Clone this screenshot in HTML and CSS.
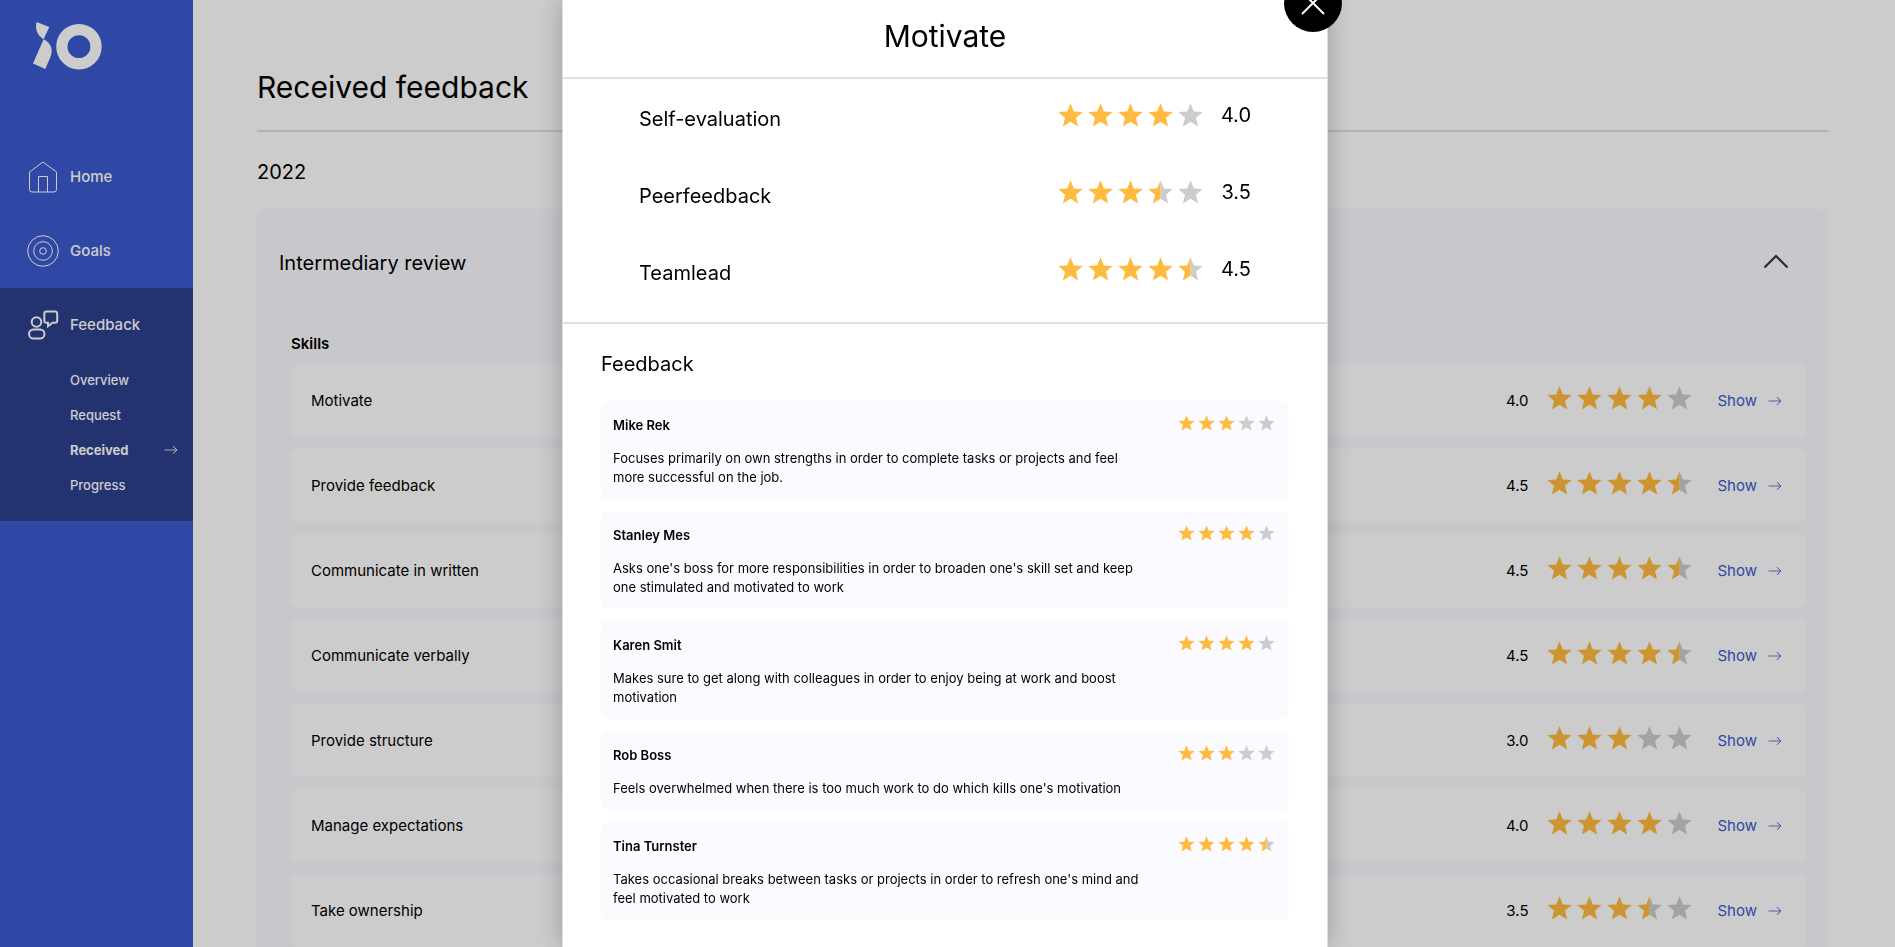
FILE: index.html
```html
<!DOCTYPE html>
<html lang="en">
<head>
<meta charset="utf-8">
<title>Received feedback</title>
<link rel="stylesheet" href="styles.css">
</head>
<body>
<svg class="sprite" aria-hidden="true">
  <symbol id="star" viewBox="0 0 25 24"><path d="M12.5 0.3 15.8 8.5 24.7 9.1 18 14.8 20.1 23.4 12.5 18.7 4.9 23.4 7 14.8 0.3 9.1 9.2 8.500Z"/></symbol>
  <symbol id="half" viewBox="0 0 25 24"><path class="off" d="M12.5 0.3 15.8 8.5 24.7 9.1 18 14.8 20.1 23.4 12.5 18.7Z"/><path d="M12.5 0.3V18.7L4.9 23.4 7 14.8 0.3 9.1 9.2 8.500Z"/></symbol>
  <symbol id="r30" viewBox="0 0 145 24"><use href="#star" width="25" height="24"/><use href="#star" x="30" width="25" height="24"/><use href="#star" x="60" width="25" height="24"/><use class="off" href="#star" x="90" width="25" height="24"/><use class="off" href="#star" x="120" width="25" height="24"/></symbol>
  <symbol id="r35" viewBox="0 0 145 24"><use href="#star" width="25" height="24"/><use href="#star" x="30" width="25" height="24"/><use href="#star" x="60" width="25" height="24"/><use href="#half" x="90" width="25" height="24"/><use class="off" href="#star" x="120" width="25" height="24"/></symbol>
  <symbol id="r40" viewBox="0 0 145 24"><use href="#star" width="25" height="24"/><use href="#star" x="30" width="25" height="24"/><use href="#star" x="60" width="25" height="24"/><use href="#star" x="90" width="25" height="24"/><use class="off" href="#star" x="120" width="25" height="24"/></symbol>
  <symbol id="r45" viewBox="0 0 145 24"><use href="#star" width="25" height="24"/><use href="#star" x="30" width="25" height="24"/><use href="#star" x="60" width="25" height="24"/><use href="#star" x="90" width="25" height="24"/><use href="#half" x="120" width="25" height="24"/></symbol>
  <symbol id="arrow" viewBox="0 0 14 10"><path class="shaft" d="M0.5 5H12.5"/><path d="M9 1.2 12.8 5 9 8.8"/></symbol>
</svg>

<div class="page">
  <aside class="sidebar">
    <svg class="logo" viewBox="98 66 208 144" role="img" aria-label="iO">
      <path d="M109 66 147 81 130 118C112 107 103 89 109 66Z"/>
      <path d="M130 118C153 129 160 151 150 173L135 207 98 191Z"/>
      <circle cx="236.500" cy="140" r="51.500"/>
    </svg>
    <nav>
      <a class="nav-item" href="#home">
        <svg class="nav-icon" viewBox="0 0 32 32"><path d="M2.500 11 16 1 29.500 11V28.500Q29.500 31 27 31H5Q2.500 31 2.500 28.500ZM11.500 31V15.500H20.500V31"/></svg>
        Home
      </a>
      <a class="nav-item" href="#goals">
        <svg class="nav-icon" viewBox="0 0 32 32"><circle cx="16" cy="16" r="15.300"/><circle cx="16" cy="16" r="9.300"/><circle cx="16" cy="16" r="3.300"/></svg>
        Goals
      </a>
      <div class="nav-group">
        <a class="nav-item" href="#feedback">
          <svg class="nav-icon thick" viewBox="0 0 32 32"><circle cx="9.500" cy="13" r="4.800"/><rect x="2" y="20.500" width="15.500" height="9" rx="4.500"/><path d="M19.500 2.500H28Q30.200 2.500 30.200 4.700V11.500Q30.200 13.700 28 13.700H25.500L21 17.200V13.700H19.500Q17.300 13.700 17.300 11.500V4.700Q17.300 2.500 19.500 2.500Z"/></svg>
          Feedback
        </a>
        <ul class="subnav">
          <li><a href="#overview">Overview</a></li>
          <li><a href="#request">Request</a></li>
          <li><a class="current" href="#received">Received <svg class="arrow"><use href="#arrow"/></svg></a></li>
          <li><a href="#progress">Progress</a></li>
        </ul>
      </div>
    </nav>
  </aside>

  <main class="main">
    <h1>Received feedback</h1>
    <h2>2022</h2>
    <section class="panel">
      <header class="panel-head">
        <h3>Intermediary review</h3>
        <button class="toggle" type="button" aria-label="Collapse"><svg viewBox="0 0 26 15"><path d="M1.500 13.500 13 2 24.500 13.500"/></svg></button>
      </header>
      <div class="skills">
        <h4>Skills</h4>
        <ul>
          <li class="skill"><span class="skill-name">Motivate</span><span>4.0</span><svg class="stars"><use href="#r40"/></svg><a href="#motivate">Show <svg class="arrow"><use href="#arrow"/></svg></a></li>
          <li class="skill"><span class="skill-name">Provide feedback</span><span>4.5</span><svg class="stars"><use href="#r45"/></svg><a href="#provide-feedback">Show <svg class="arrow"><use href="#arrow"/></svg></a></li>
          <li class="skill"><span class="skill-name">Communicate in written</span><span>4.5</span><svg class="stars"><use href="#r45"/></svg><a href="#written">Show <svg class="arrow"><use href="#arrow"/></svg></a></li>
          <li class="skill"><span class="skill-name">Communicate verbally</span><span>4.5</span><svg class="stars"><use href="#r45"/></svg><a href="#verbally">Show <svg class="arrow"><use href="#arrow"/></svg></a></li>
          <li class="skill"><span class="skill-name">Provide structure</span><span>3.0</span><svg class="stars"><use href="#r30"/></svg><a href="#structure">Show <svg class="arrow"><use href="#arrow"/></svg></a></li>
          <li class="skill"><span class="skill-name">Manage expectations</span><span>4.0</span><svg class="stars"><use href="#r40"/></svg><a href="#expectations">Show <svg class="arrow"><use href="#arrow"/></svg></a></li>
          <li class="skill"><span class="skill-name">Take ownership</span><span>3.5</span><svg class="stars"><use href="#r35"/></svg><a href="#ownership">Show <svg class="arrow"><use href="#arrow"/></svg></a></li>
        </ul>
      </div>
    </section>
  </main>
</div>

<div class="overlay">
  <div class="modal" role="dialog" aria-modal="true" aria-labelledby="modal-title">
    <button class="close" type="button" aria-label="Close"><svg viewBox="0 0 24 24"><path d="M1 1 23 23M23 1 1 23"/></svg></button>
    <h2 id="modal-title">Motivate</h2>
    <ul class="scores">
      <li><span>Self-evaluation</span><div class="score"><svg class="stars"><use href="#r40"/></svg>4.0</div></li>
      <li><span>Peerfeedback</span><div class="score"><svg class="stars"><use href="#r35"/></svg>3.5</div></li>
      <li><span>Teamlead</span><div class="score"><svg class="stars"><use href="#r45"/></svg>4.5</div></li>
    </ul>
    <section class="feedback">
      <h3>Feedback</h3>
      <article class="card"><header><h4>Mike Rek</h4><svg class="stars small"><use href="#r30"/></svg></header><p>Focuses primarily on own strengths in order to complete tasks or projects and feel more successful on the job.</p></article>
      <article class="card"><header><h4>Stanley Mes</h4><svg class="stars small"><use href="#r40"/></svg></header><p>Asks one's boss for more responsibilities in order to broaden one's skill set and keep one stimulated and motivated to work</p></article>
      <article class="card"><header><h4>Karen Smit</h4><svg class="stars small"><use href="#r40"/></svg></header><p>Makes sure to get along with colleagues in order to enjoy being at work and boost motivation</p></article>
      <article class="card"><header><h4>Rob Boss</h4><svg class="stars small"><use href="#r30"/></svg></header><p>Feels overwhelmed when there is too much work to do which kills one's motivation</p></article>
      <article class="card"><header><h4>Tina Turnster</h4><svg class="stars small"><use href="#r45"/></svg></header><p>Takes occasional breaks between tasks or projects in order to refresh one's mind and feel motivated to work</p></article>
    </section>
  </div>
</div>
</body>
</html>
```
FILE: styles.css
```css
* { box-sizing: border-box; }
html, body { height: 100%; overflow: hidden; }
body { margin: 0; font-family: Inter, "Liberation Sans", sans-serif; font-size: 15px; line-height: 20px; color: #000; background: #fff; }
h1, h2, h3, h4, p, ul { margin: 0; padding: 0; }
ul { list-style: none; }
a { color: inherit; text-decoration: none; }
button { padding: 0; border: 0; background: none; cursor: pointer; }
svg { display: block; flex: none; }
.sprite { position: absolute; width: 0; height: 0; }

.stars { width: 145px; height: 24px; fill: #ffbb3f; }
.stars.small { width: 97px; height: 16px; }
.off { fill: #ccc; }
.arrow { width: 14px; height: 10px; fill: none; stroke: currentColor; stroke-width: 1; }
.shaft { opacity: 0.8; }

.page { display: flex; min-height: 100%; }

.sidebar { flex: none; width: 193px; min-height: 100vh; padding-top: 22px; background: #3d5bcf; color: #fff; font-weight: 500; }
.logo { width: 69px; height: 48px; margin: 0 0 70px 33px; fill: #fff; }
.logo circle { fill: none; stroke: #fff; stroke-width: 34; }
.nav-item { display: flex; align-items: center; gap: 11px; height: 74px; padding-left: 27px; }
.nav-icon { width: 32px; height: 32px; fill: none; stroke: #fff; stroke-width: 1; }
.nav-icon.thick { stroke-width: 2; }
.nav-group { padding-bottom: 19px; background: #2c408c; }
.subnav a { display: flex; align-items: center; justify-content: space-between; height: 35px; padding: 0 15px 0 70px; font-size: 13px; }
.subnav .current { font-weight: 700; }

.main { flex: 1; padding: 67px 67px 0 64px; }
.main h1 { padding-bottom: 23px; border-bottom: 2px solid #e0e0e0; font-size: 30px; font-weight: 400; line-height: 40px; }
.main h2 { padding: 28px 0 25px; font-size: 20px; font-weight: 400; line-height: 24px; }
.panel { padding-bottom: 32px; border-radius: 10px; background: #faf9ff; }
.panel-head { display: flex; justify-content: space-between; align-items: center; padding: 42px 39px 42px 22px; }
.panel-head h3 { font-size: 20px; font-weight: 400; line-height: 24px; }
.toggle { padding-bottom: 4px; }
.toggle svg { width: 26px; height: 15px; fill: none; stroke: #303030; stroke-width: 2; }
.skills { padding: 17px 22px 0 34px; }
.skills h4 { padding-bottom: 10px; font-size: 15px; font-weight: 600; }
.skill { display: flex; align-items: center; height: 73px; margin-bottom: 12px; padding: 0 24px 0 20px; border-radius: 6px; background: #fff; }
.skill-name { flex: 1; }
.skill .stars { margin: 0 26px 6px 18px; }
.skill a { display: flex; align-items: center; gap: 11px; color: #3d5bcf; }

.overlay { position: fixed; inset: 0; display: flex; justify-content: center; padding-right: 5px; background: rgba(0, 0, 0, 0.2); }
.modal { position: relative; width: 766px; min-height: 100%; border: solid #ddd; border-width: 0 1px; background: #fff; box-shadow: 0 0 24px rgba(0, 0, 0, 0.25); }
.close { position: absolute; top: -26px; right: -15px; display: grid; place-items: center; width: 58px; height: 58px; border-radius: 50%; background: #000; }
.close svg { width: 24px; height: 24px; fill: none; stroke: #fff; stroke-width: 2; }
.modal h2 { padding: 16px 0 21px; border-bottom: 2px solid #e0e0e0; font-size: 30px; font-weight: 400; line-height: 40px; text-align: center; }
.scores { padding: 1px 76px 11px; border-bottom: 2px solid #e0e0e0; font-size: 20px; line-height: 24px; }
.scores li { display: flex; align-items: center; justify-content: space-between; height: 77px; }
.score { display: flex; align-items: center; gap: 18px; padding-bottom: 8px; }
.feedback { padding: 28px 38px 0; }
.feedback h3 { padding-bottom: 25px; font-size: 20px; font-weight: 400; line-height: 24px; }
.card { margin-bottom: 12px; padding: 14px 14px 12px 12px; border-radius: 6px; background: #fbfaff; font-size: 13px; line-height: 19px; }
.card header { display: flex; justify-content: space-between; align-items: flex-start; padding-bottom: 14px; }
.card h4 { padding-top: 1px; font-size: 13px; font-weight: 600; }
.card p { max-width: 536px; }
```
